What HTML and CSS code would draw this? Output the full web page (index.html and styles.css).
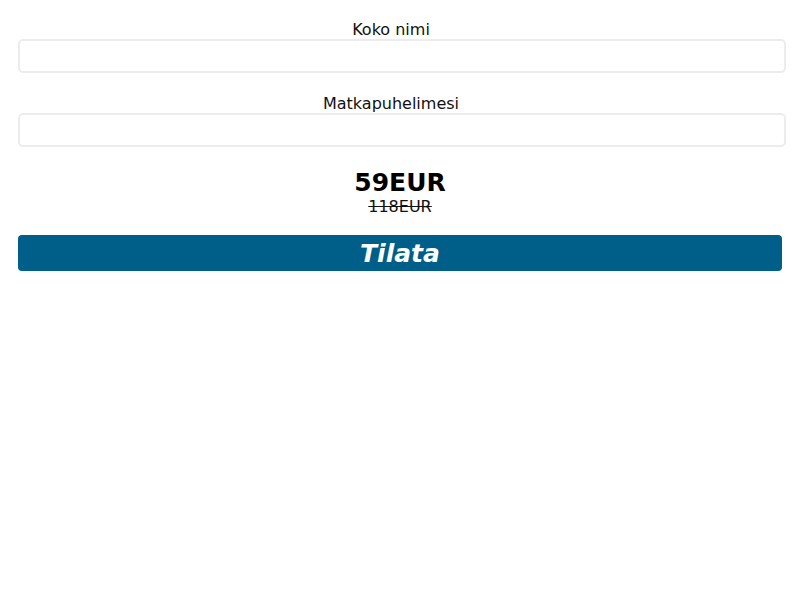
FILE: index.html
```html
<!DOCTYPE html>
<html>
<head>
    <meta name="viewport" content="width=device-width, initial-scale=1.0">
    <title>Tilaus</title>
    <link rel="stylesheet" href="styles.css">
</head>
<body>
    <form class="order-form" onsubmit="return false;">
        <div class="field">
            <label for="name">Koko nimi</label>
            <input type="text" id="name" name="name">
        </div>
        <div class="field">
            <label for="phone">Matkapuhelimesi</label>
            <input type="tel" id="phone" name="phone">
        </div>

        <div class="price">
            <div class="price-new">59EUR</div>
            <div class="price-old">118EUR</div>
        </div>

        <button type="submit">Tilata</button>
    </form>
</body>
</html>
```

FILE: styles.css
```css
* {
    box-sizing: border-box;
    margin: 0;
    padding: 0;
}

body {
    background: #fff;
    font-family: 'DejaVu Sans', sans-serif;
    color: #000;
}

.order-form {
    padding: 20px 18px 0 18px;
}

.field {
    margin-bottom: 21px;
}

label {
    display: block;
    text-align: center;
    font-size: 16px;
    line-height: 19px;
    padding-right: 18px;
    color: #111;
}

input {
    display: block;
    width: calc(100% + 4px);
    height: 34px;
    border: 2px solid #ececec;
    border-radius: 5px;
    padding: 0 10px;
    font-family: inherit;
    font-size: 16px;
    background: #fff;
}

.price {
    text-align: center;
    padding-top: 1px;
}

.price-new {
    font-size: 25px;
    font-weight: bold;
    line-height: 28px;
}

.price-old {
    font-size: 16px;
    line-height: 19px;
    text-decoration: line-through;
    color: #111;
}

button {
    display: block;
    width: 100%;
    height: 36px;
    margin-top: 19px;
    background: #005f89;
    color: #fff;
    border: none;
    border-radius: 4px;
    font-family: inherit;
    font-size: 25px;
    font-weight: bold;
    font-style: italic;
    cursor: pointer;
}
```
